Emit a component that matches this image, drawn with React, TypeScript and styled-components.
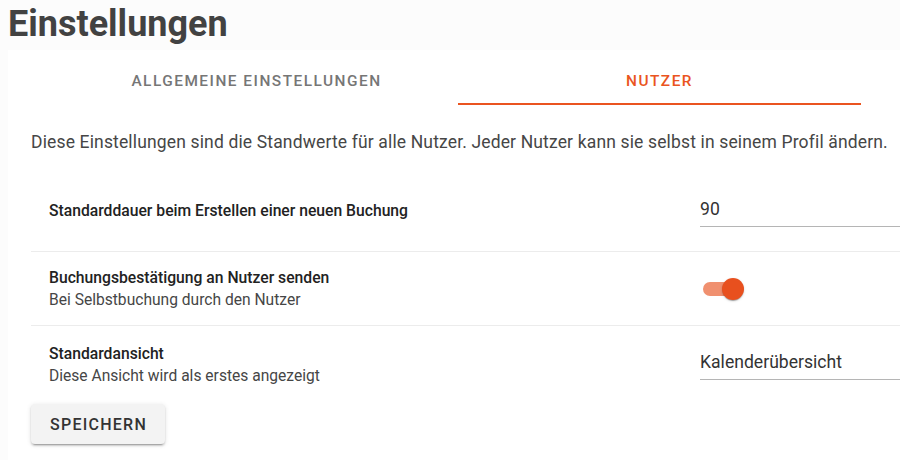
import React from "react";
import styled, { createGlobalStyle } from "styled-components";

const ORANGE = "#ea5420";

const GlobalStyle = createGlobalStyle`
  html, body {
    margin: 0;
    padding: 0;
    background: #fcfcfc;
    overflow: hidden;
    font-family: Roboto, "Liberation Sans", sans-serif;
  }
`;

const Page = styled.div`
  width: 900px;
  height: 460px;
  padding-left: 8px;
  box-sizing: border-box;
`;

const Header = styled.header`
  height: 50px;
  padding-top: 3px;
  box-sizing: border-box;
`;

const Title = styled.h1`
  margin: 0;
  font-size: 36px;
  line-height: 42px;
  font-weight: 700;
  color: #424242;
  letter-spacing: 0;
`;

const Card = styled.section`
  width: 960px;
  height: 410px;
  background: #ffffff;
  padding-top: 7px;
  box-sizing: border-box;
`;

const Tabs = styled.nav`
  display: flex;
  width: 806px;
  margin-left: 47px;
`;

const Tab = styled.div<{ $active?: boolean }>`
  flex: 1;
  height: 48px;
  box-sizing: border-box;
  display: flex;
  align-items: center;
  justify-content: center;
  font-size: 15.4px;
  font-weight: 500;
  letter-spacing: 1.5px;
  text-transform: uppercase;
  color: ${(p) => (p.$active ? ORANGE : "#767676")};
  border-bottom: 2px solid ${(p) => (p.$active ? ORANGE : "transparent")};
  padding-top: 2px;
`;

const Content = styled.div`
  padding-left: 23px;
`;

const Description = styled.p`
  margin: 24px 0 0;
  font-size: 17.5px;
  line-height: 26px;
  color: #464646;
  letter-spacing: 0.15px;
  white-space: nowrap;
`;

const List = styled.div`
  margin-top: 15px;
  width: 909px;
`;

const Row = styled.div<{ $height: number; $divider?: boolean }>`
  display: flex;
  align-items: center;
  justify-content: space-between;
  height: ${(p) => p.$height}px;
  padding-left: 18px;
  border-bottom: ${(p) => (p.$divider ? "1px solid #ececec" : "none")};
`;

const LabelBlock = styled.div`
  display: flex;
  flex-direction: column;
`;

const Label = styled.div`
  font-size: 15.7px;
  line-height: 23px;
  font-weight: 500;
  color: #222222;
`;

const SubLabel = styled.div`
  font-size: 15.6px;
  line-height: 23px;
  color: #464646;
`;

const Control = styled.div<{ $offset?: number }>`
  width: 240px;
  flex-shrink: 0;
  margin-bottom: ${(p) => p.$offset ?? 0}px;
`;

const Field = styled.div`
  font-size: 17.6px;
  line-height: 24px;
  padding: 4px 0 5px;
  color: #333333;
  border-bottom: 1px solid #b5b5b5;
`;

const SwitchTrack = styled.div`
  position: relative;
  width: 33px;
  height: 14px;
  margin-left: 3px;
  border-radius: 7px;
  background: #f0906f;
`;

const SwitchThumb = styled.span`
  position: absolute;
  top: -4px;
  left: 19px;
  width: 22px;
  height: 22px;
  border-radius: 50%;
  background: #e8501e;
  box-shadow: 0 2px 1px -1px rgba(0, 0, 0, 0.2), 0 1px 1px 0 rgba(0, 0, 0, 0.14),
    0 1px 3px 0 rgba(0, 0, 0, 0.12);
`;

const SaveButton = styled.button`
  height: 40px;
  padding: 0 18px 0 19px;
  border: none;
  border-radius: 4px;
  background: #f3f3f3;
  font-family: Roboto, "Liberation Sans", sans-serif;
  font-size: 16px;
  font-weight: 500;
  letter-spacing: 1.25px;
  color: #333333;
  text-transform: uppercase;
  box-shadow: 0 3px 1px -2px rgba(0, 0, 0, 0.2), 0 2px 2px 0 rgba(0, 0, 0, 0.14),
    0 1px 5px 0 rgba(0, 0, 0, 0.12);
  cursor: pointer;
`;

export default function App() {
  return (
    <>
      <GlobalStyle />
      <Page>
        <Header>
          <Title>Einstellungen</Title>
        </Header>
        <Card>
          <Tabs>
            <Tab>Allgemeine Einstellungen</Tab>
            <Tab $active>Nutzer</Tab>
          </Tabs>
          <Content>
            <Description>
              Diese Einstellungen sind die Standwerte für alle Nutzer. Jeder Nutzer kann sie selbst in seinem Profil ändern.
            </Description>
            <List>
              <Row $height={81} $divider>
                <LabelBlock>
                  <Label>Standarddauer beim Erstellen einer neuen Buchung</Label>
                </LabelBlock>
                <Control $offset={2}>
                  <Field>90</Field>
                </Control>
              </Row>
              <Row $height={73} $divider>
                <LabelBlock>
                  <Label>Buchungsbestätigung an Nutzer senden</Label>
                  <SubLabel>Bei Selbstbuchung durch den Nutzer</SubLabel>
                </LabelBlock>
                <Control>
                  <SwitchTrack>
                    <SwitchThumb />
                  </SwitchTrack>
                </Control>
              </Row>
              <Row $height={78}>
                <LabelBlock>
                  <Label>Standardansicht</Label>
                  <SubLabel>Diese Ansicht wird als erstes angezeigt</SubLabel>
                </LabelBlock>
                <Control $offset={4}>
                  <Field>Kalenderübersicht</Field>
                </Control>
              </Row>
            </List>
            <SaveButton>Speichern</SaveButton>
          </Content>
        </Card>
      </Page>
    </>
  );
}
